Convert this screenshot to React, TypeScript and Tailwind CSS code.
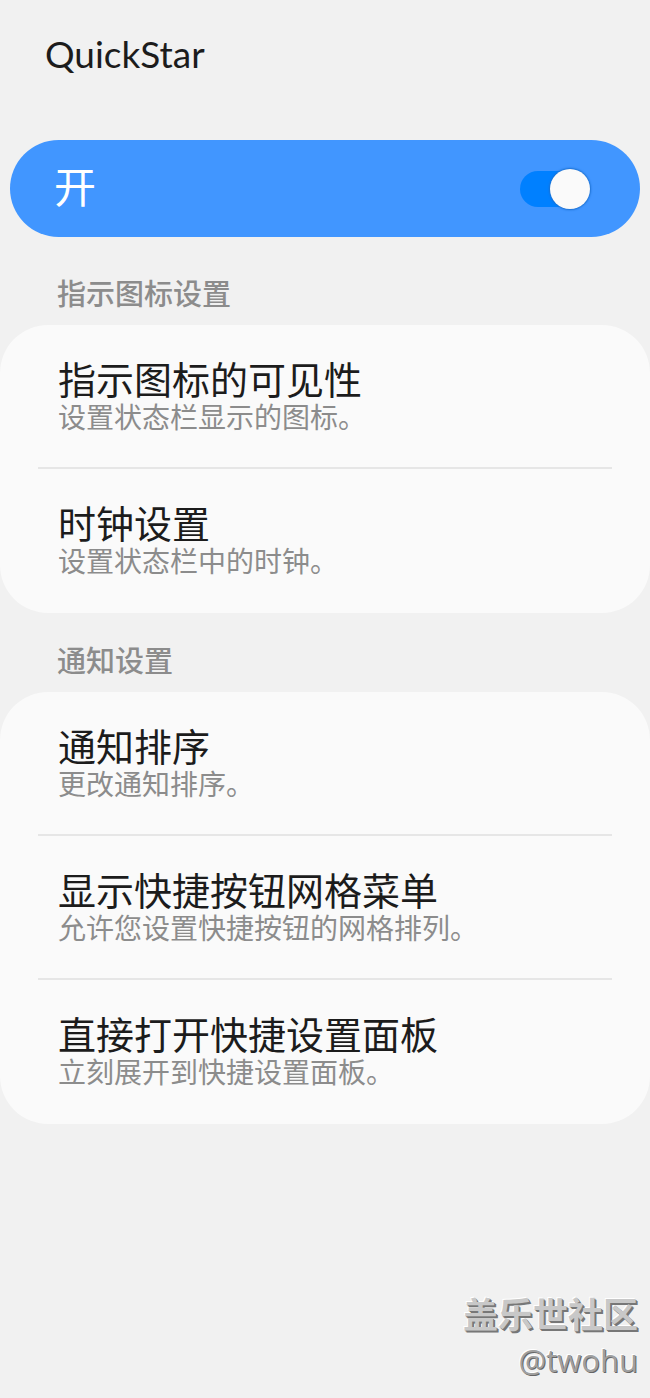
import { useState } from 'react';

type SettingItem = {
  title: string;
  description: string;
};

const indicatorItems: SettingItem[] = [
  { title: "指示图标的可见性", description: "设置状态栏显示的图标。" },
  { title: "时钟设置", description: "设置状态栏中的时钟。" }
];

const notificationItems: SettingItem[] = [
  { title: "通知排序", description: "更改通知排序。" },
  { title: "显示快捷按钮网格菜单", description: "允许您设置快捷按钮的网格排列。" },
  { title: "直接打开快捷设置面板", description: "立刻展开到快捷设置面板。" }
];

const SettingCard = ({ items }: { items: SettingItem[] }) => (
  <ul className="bg-[#fafafa] rounded-[48px] px-[38px] pb-0.5 divide-y-2 divide-[#e6e6e6]">
    {items.map((item) => (
      <li key={item.title}>
        <button type="button" className="block w-full px-5 pt-[34px] pb-8 text-left">
          <span className="block text-[38px] leading-[44px] text-[#1c1c1c]">{item.title}</span>
          <span className="block text-[28px] leading-8 text-[#8c8c8c]">{item.description}</span>
        </button>
      </li>
    ))}
  </ul>
);

const App = () => {
  const [enabled, setEnabled] = useState(true);

  return (
    <div className="min-h-screen flex flex-col bg-[#f1f1f1] font-['Liberation_Sans','Noto_Sans_CJK_SC',sans-serif]">
      <header className="px-[45px] pt-8 pb-16">
        <h1 className="text-[37px] leading-[44px] text-[#1c1c1c] font-[Lato,sans-serif]">QuickStar</h1>
      </header>

      <main>
        <label className="mx-[10px] h-[97px] pl-11 pr-[50px] flex items-center justify-between rounded-full bg-[#4196ff] cursor-pointer">
          <span className="text-[42px] leading-[48px] text-white">{enabled ? "开" : "关"}</span>
          <span className="relative flex items-center">
            <input
              type="checkbox"
              role="switch"
              className="appearance-none w-[70px] h-9 rounded-full bg-[#8fbfff] checked:bg-[#0080ff] peer"
              checked={enabled}
              onChange={(e) => setEnabled(e.target.checked)}
            />
            {/* Thumb */}
            <span className="absolute left-0 peer-checked:left-[30px] size-10 rounded-full bg-[#fafafa] shadow-[0_0_2px_1px_#1a6fd0] pointer-events-none"></span>
          </span>
        </label>

        <section>
          <h2 className="px-[57px] pt-10 pb-3 text-[29px] leading-9 font-medium text-[#8c8c8c]">指示图标设置</h2>
          <SettingCard items={indicatorItems} />
        </section>

        <section>
          <h2 className="px-[57px] pt-[31px] pb-3 text-[29px] leading-9 font-medium text-[#8c8c8c]">通知设置</h2>
          <SettingCard items={notificationItems} />
        </section>
      </main>

      <footer className="mt-auto px-3 pb-[18px] text-right text-[#c8c8c8]">
        <p className="text-[35px] leading-[48px] font-bold [text-shadow:1px_1px_0_#777,2px_2px_0_#777,-1px_-1px_0_#fff]">盖乐世社区</p>
        <p className="text-[31px] leading-[40px] font-['Open_Sans',sans-serif] text-[#a0a0a0] [text-shadow:1px_1px_0_#666,-1px_-1px_0_#fff]">@twohu</p>
      </footer>
    </div>
  );
};

export default App;
